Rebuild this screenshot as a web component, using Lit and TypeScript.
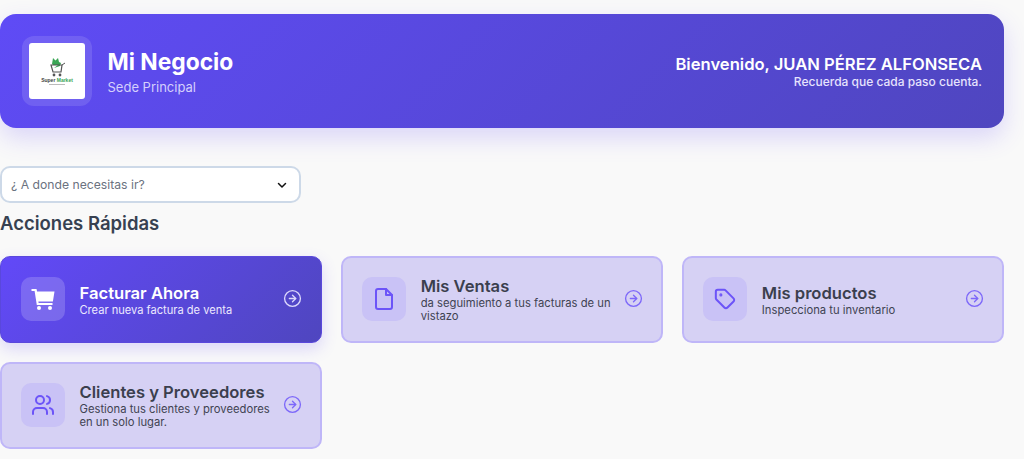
import { LitElement, html, css, svg } from "lit";
import { customElement } from "lit/decorators.js";

const arrow = html`<svg class="arrow" viewBox="0 0 24 24" fill="none" stroke="currentColor" stroke-width="2" stroke-linecap="round" stroke-linejoin="round"><circle cx="12" cy="12" r="10"/><path d="M12 16l4-4-4-4"/><path d="M8 12h8"/></svg>`;

const stroke = (body: unknown) => html`<svg class="ico" viewBox="0 0 24 24" fill="none" stroke="currentColor" stroke-width="2" stroke-linecap="round" stroke-linejoin="round">${body}</svg>`;

const cartIcon = html`<svg class="ico" viewBox="0 0 24 24" fill="currentColor"><path d="M0.5 2h5l.6 2.4H23.5l-1.6 10H7.4l.2 1.6H21.5v2H5.8L3.6 4H.5z"/><circle cx="8" cy="21" r="2"/><circle cx="19" cy="21" r="2"/></svg>`;
const fileIcon = stroke(svg`<path d="M14 2H6a2 2 0 0 0-2 2v16a2 2 0 0 0 2 2h12a2 2 0 0 0 2-2V8z"/><path d="M14 2v6h6"/>`);
const tagIcon = html`<svg class="ico tag" viewBox="0 0 24 24" fill="none" stroke="currentColor" stroke-width="2.2" stroke-linecap="round" stroke-linejoin="round"><path d="M12.6 2.6A2 2 0 0 0 11.2 2H4a2 2 0 0 0-2 2v7.2a2 2 0 0 0 .6 1.4l8.7 8.7a2.4 2.4 0 0 0 3.4 0l6.6-6.6a2.4 2.4 0 0 0 0-3.4z"/><circle cx="7.5" cy="7.5" r=".6" fill="currentColor"/></svg>`;
const usersIcon = stroke(svg`<path d="M16 21v-2a4 4 0 0 0-4-4H6a4 4 0 0 0-4 4v2"/><circle cx="9" cy="7" r="4"/><path d="M22 21v-2a4 4 0 0 0-3-3.87"/><path d="M16 3.13a4 4 0 0 1 0 7.75"/>`);

const actions = [
  { title: "Facturar Ahora", sub: "Crear nueva factura de venta", icon: cartIcon, primary: true },
  { title: "Mis Ventas", sub: "da seguimiento a tus facturas de un vistazo", icon: fileIcon, primary: false },
  { title: "Mis productos", sub: "Inspecciona tu inventario", icon: tagIcon, primary: false },
  { title: "Clientes y Proveedores", sub: "Gestiona tus clientes y proveedores en un solo lugar.", icon: usersIcon, primary: false },
];

@customElement("app-root")
export class AppRoot extends LitElement {
  static styles = css`
    :host {
      display: block;
      box-sizing: border-box;
      height: 459px;
      overflow: hidden;
      background: #f9f9f9;
      padding: 14px 20px 0 0;
      font-family: Inter, "Liberation Sans", sans-serif;
      color: #374151;
    }
    * { box-sizing: border-box; }
    .hero {
      height: 114px;
      border-radius: 16px;
      background: linear-gradient(135deg, #5f4bf6 0%, #4f46bf 100%);
      box-shadow: 0 10px 25px rgba(98, 73, 248, 0.2);
      display: flex;
      align-items: center;
      justify-content: space-between;
      padding: 0 22px;
      color: #fff;
    }
    .brand { display: flex; align-items: center; gap: 15.5px; }
    .logo-wrap {
      width: 70px;
      height: 70px;
      padding: 7px;
      border-radius: 12px;
      background: rgba(255, 255, 255, 0.12);
    }
    .logo {
      width: 56px;
      height: 56px;
      border-radius: 3px;
      background: #fff;
      display: flex;
      flex-direction: column;
      align-items: center;
      justify-content: center;
    }
    .logo svg { width: 18px; height: 20px; display: block; }
    .logo-text { font: 700 5px/6px "Liberation Sans", sans-serif; color: #444; white-space: nowrap; }
    .logo-text b { color: #3aa655; }
    .logo-tag { height: 1px; width: 16px; margin-top: 1px; background: #bbb; }
    .name { font-size: 22.8px; line-height: 29px; font-weight: 700; }
    .place { font-size: 13px; line-height: 18px; color: #d5d0fc; margin-top: 2px; }
    .welcome { text-align: right; }
    .welcome-main { font-size: 16.6px; line-height: 20px; font-weight: 600; }
    .welcome-sub { font-size: 12px; line-height: 15px; color: #e6e3fd; font-weight: 500; }
    .select {
      width: 301px;
      height: 37px;
      margin-top: 38px;
      background: #fff;
      border: 2px solid #cdd9e8;
      border-radius: 10px;
      display: flex;
      align-items: center;
      justify-content: space-between;
      padding: 0 11px 0 9px;
      font-size: 12.2px;
      color: #6b7280;
    }
    .select svg { width: 12px; height: 12px; color: #111; }
    h2 {
      margin: 8px 0 0;
      font-size: 18.5px;
      line-height: 24px;
      font-weight: 600;
      color: #374151;
    }
    .grid {
      display: grid;
      grid-template-columns: repeat(3, 1fr);
      column-gap: 19.5px;
      row-gap: 19.5px;
      margin-top: 21px;
    }
    .card {
      height: 86.5px;
      border-radius: 10px;
      border: 2px solid #bfb6f8;
      background: #d6d1f4;
      display: flex;
      align-items: center;
      padding: 0 18px 0 18.5px;
      gap: 15px;
      color: #6c54f8;
    }
    .card.primary {
      border: 1px solid #5a48dc;
      padding: 0 19px 0 19.5px;
      background: linear-gradient(135deg, #6249f8 0%, #4f46bf 100%);
      box-shadow: 0 6px 16px rgba(98, 73, 248, 0.2);
      color: #fff;
    }
    .tile {
      flex: none;
      width: 44px;
      height: 44px;
      border-radius: 10px;
      background: #c9c2f6;
      display: flex;
      align-items: center;
      justify-content: center;
    }
    .primary .tile { background: rgba(255, 255, 255, 0.18); }
    .ico { width: 24px; height: 24px; display: block; }
    .ico.tag { width: 22px; height: 22px; }
    .text { flex: 1; min-width: 0; padding-top: 1px; margin-right: -5px; }
    .title { font-size: 16.6px; line-height: 20px; font-weight: 600; color: #3b3f4e; white-space: nowrap; }
    .sub { font-size: 11.25px; line-height: 13.5px; font-weight: 400; color: #3f4352; margin-top: 1px; }
    .primary .title { color: #fff; }
    .primary .sub { color: #ece9fe; font-size: 11.1px; }
    .arrow { flex: none; width: 19px; height: 19px; display: block; color: #7d68f9; stroke-width: 1.7; margin-top: -1px; }
    .primary .arrow { color: #dcd8fc; }
  `;

  render() {
    return html`
      <header class="hero">
        <div class="brand">
          <div class="logo-wrap">
            <div class="logo">
              <svg viewBox="0 0 18 20">
                <path d="M4 7 L5 1 L7.5 3.5 L10 1 L11 5 L13 6 L12 9 L6 11 L10 8 L5 8z" fill="#3aa655"/>
                <path d="M3 8h11l-1 7H5z" fill="none" stroke="#555" stroke-width="1.2"/>
                <path d="M14 8l3-2" stroke="#555" stroke-width="1"/>
                <circle cx="6" cy="18" r="1.4" fill="#555"/>
                <circle cx="12" cy="18" r="1.4" fill="#555"/>
              </svg>
              <div class="logo-text">Super <b>Market</b></div>
              <div class="logo-tag"></div>
            </div>
          </div>
          <div>
            <div class="name">Mi Negocio</div>
            <div class="place">Sede Principal</div>
          </div>
        </div>
        <div class="welcome">
          <div class="welcome-main">Bienvenido, JUAN PÉREZ ALFONSECA</div>
          <div class="welcome-sub">Recuerda que cada paso cuenta.</div>
        </div>
      </header>
      <div class="select">
        <span>¿ A donde necesitas ir?</span>
        <svg viewBox="0 0 24 24" fill="none" stroke="currentColor" stroke-width="3" stroke-linecap="round" stroke-linejoin="round"><path d="M5 9l7 7 7-7"/></svg>
      </div>
      <h2>Acciones Rápidas</h2>
      <div class="grid">
        ${actions.map(
          (a) => html`
            <div class="card ${a.primary ? "primary" : ""}">
              <div class="tile">${a.icon}</div>
              <div class="text">
                <div class="title">${a.title}</div>
                <div class="sub">${a.sub}</div>
              </div>
              ${arrow}
            </div>
          `
        )}
      </div>
    `;
  }
}
